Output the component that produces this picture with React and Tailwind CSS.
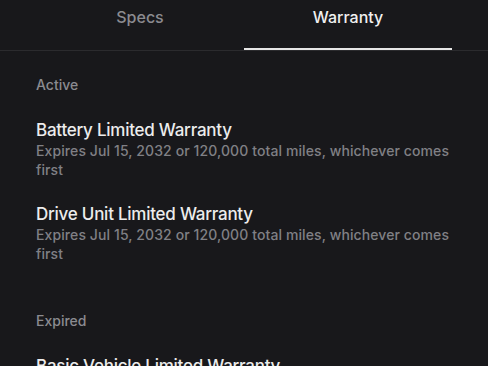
const sections = [
  {
    label: "Active",
    items: [
      {
        title: "Battery Limited Warranty",
        detail: "Expires Jul 15, 2032 or 120,000 total miles, whichever comes first",
      },
      {
        title: "Drive Unit Limited Warranty",
        detail: "Expires Jul 15, 2032 or 120,000 total miles, whichever comes first",
      },
    ],
  },
  {
    label: "Expired",
    items: [
      {
        title: "Basic Vehicle Limited Warranty",
        detail: "Expired Jul 15, 2028 or 50,000 total miles, whichever came first",
      },
    ],
  },
];

export default function App() {
  return (
    <div
      className="h-[366px] w-[488px] overflow-hidden bg-[#18181b] text-[#ededed]"
      style={{ fontFamily: "Inter, 'Noto Sans', sans-serif" }}
    >
      {/* Tabs */}
      <div className="border-b border-[#2b2b2e] px-[36px]">
        <div className="grid grid-cols-2">
          <Tab label="Specs" />
          <Tab label="Warranty" active />
        </div>
      </div>

      {/* Content */}
      <div className="flex flex-col gap-[48px] px-[36px] pt-[24px]">
        {sections.map((s) => (
          <div key={s.label} className="flex flex-col gap-[24px]">
            <div className="text-[14px] leading-[20px] font-medium text-[#8b8b90]">
              {s.label}
            </div>
            {s.items.map((it) => (
              <div key={it.title}>
                <div className="text-[17px] leading-[22px] font-medium tracking-[-0.25px] text-[#ececec]">
                  {it.title}
                </div>
                <div className="text-[14px] leading-[19px] font-medium tracking-[0.1px] text-[#808085]">
                  {it.detail}
                </div>
              </div>
            ))}
          </div>
        ))}
      </div>
    </div>
  );
}

function Tab({ label, active = false }) {
  return (
    <div
      className={
        active
          ? "h-[50px] border-b-2 border-[#e6e6e6] pt-[6px] text-center text-[16px] leading-[22px] font-medium text-[#f0f0f0]"
          : "h-[50px] border-b-2 border-transparent pt-[6px] text-center text-[16px] leading-[22px] font-medium text-[#8b8b90]"
      }
    >
      {label}
    </div>
  );
}
